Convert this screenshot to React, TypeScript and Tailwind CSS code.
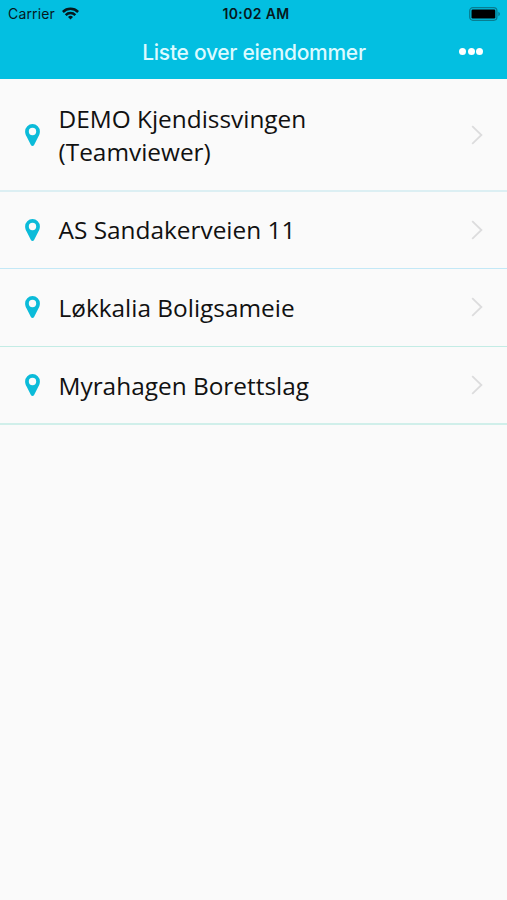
const properties = [
  { id: 1, name: "DEMO Kjendissvingen (Teamviewer)", row: "h-[113px] border-b-2 border-[#dceff3]" },
  { id: 2, name: "AS Sandakerveien 11", row: "h-[77px] pb-px border-b border-[#c3e8f6]" },
  { id: 3, name: "Løkkalia Boligsameie", row: "h-[78px] pb-px border-b border-[#c3ece5]" },
  { id: 4, name: "Myrahagen Borettslag", row: "h-[78px] border-b-2 border-[#d0efea]" },
];

const WifiIcon = () => (
  <svg className="w-[17px] h-[13px]" viewBox="0 0 17 13" fill="none" stroke="#06191d" strokeWidth="2.5">
    <path d="M0.9 5a10.8 10.8 0 0 1 15.2 0" />
    <path d="M3.7 8.1a6.8 6.8 0 0 1 9.6 0" />
    <path d="M8.5 12.6 6 10.1a3.5 3.5 0 0 1 5 0z" fill="#06191d" stroke="none" />
  </svg>
);

const BatteryIcon = () => (
  <svg className="w-8 h-[14px]" viewBox="0 0 32 14" fill="none">
    <rect x="0.7" y="0.7" width="27.2" height="12.6" rx="3.2" stroke="#087d91" strokeWidth="1.3" />
    <rect x="2.5" y="2.5" width="23.8" height="9" rx="1.2" fill="#000" />
    <path d="M29.3 4.8c2.2.8 2.2 3.6 0 4.4z" fill="#087d91" />
  </svg>
);

const PinIcon = () => (
  <svg className="w-[15px] h-[22px] shrink-0" viewBox="0 0 15 22">
    <path
      fill="#0bbbd9"
      fillRule="evenodd"
      d="M7.5 0A7.4 7.4 0 0 0 .1 7.4c0 1.9.7 3.5 1.5 5.1l4.3 8.6c.7 1.2 2.5 1.2 3.2 0l4.3-8.6c.8-1.6 1.5-3.2 1.5-5.1A7.4 7.4 0 0 0 7.5 0zm0 3.8a3.7 3.7 0 1 1 0 7.4 3.7 3.7 0 0 1 0-7.4z"
    />
  </svg>
);

const ChevronIcon = () => (
  <svg className="w-3 h-5 shrink-0" viewBox="0 0 12 20" fill="none" stroke="#dcdcdd" strokeWidth="1.8">
    <path d="M1.2 1.2 10.4 10 1.2 18.8" />
  </svg>
);

const Header = () => (
  <header className="h-[79px] bg-[#03bfe1] font-['Inter',sans-serif]">
    <div className="grid grid-cols-3 items-center h-[27px] pl-2 pr-[6px] text-[#06191d]">
      <div className="flex items-center gap-[7px]">
        <span className="text-[14px] leading-none tracking-[0.15px]">Carrier</span>
        <WifiIcon />
      </div>
      <span className="pl-[3px] text-center text-[14px] font-semibold leading-none tracking-[0.35px] whitespace-nowrap">
        10:02 AM
      </span>
      <div className="flex justify-end">
        <BatteryIcon />
      </div>
    </div>
    <div className="grid grid-cols-[1fr_auto_1fr] items-center h-[50px] pr-6">
      <h1 className="col-start-2 pl-[25px] text-[21px] font-medium leading-none tracking-[-0.28px] text-[#dcfaff]">
        Liste over eiendommer
      </h1>
      <button className="flex justify-end gap-[1.5px] pb-px" aria-label="Meny">
        <span className="size-[7px] rounded-full bg-white" />
        <span className="size-[7px] rounded-full bg-white" />
        <span className="size-[7px] rounded-full bg-white" />
      </button>
    </div>
  </header>
);

const App = () => {
  return (
    <div className="min-h-screen bg-[#fafafa]">
      <Header />
      <ul>
        {properties.map((property) => (
          <li key={property.id} className={`flex items-center pl-[25px] pr-6 ${property.row}`}>
            <PinIcon />
            <span className="ml-[18.5px] w-[300px] font-['Open_Sans',sans-serif] text-[24.4px] leading-[33px] text-[#111]">
              {property.name}
            </span>
            <div className="ml-auto">
              <ChevronIcon />
            </div>
          </li>
        ))}
      </ul>
    </div>
  );
};

export default App;
